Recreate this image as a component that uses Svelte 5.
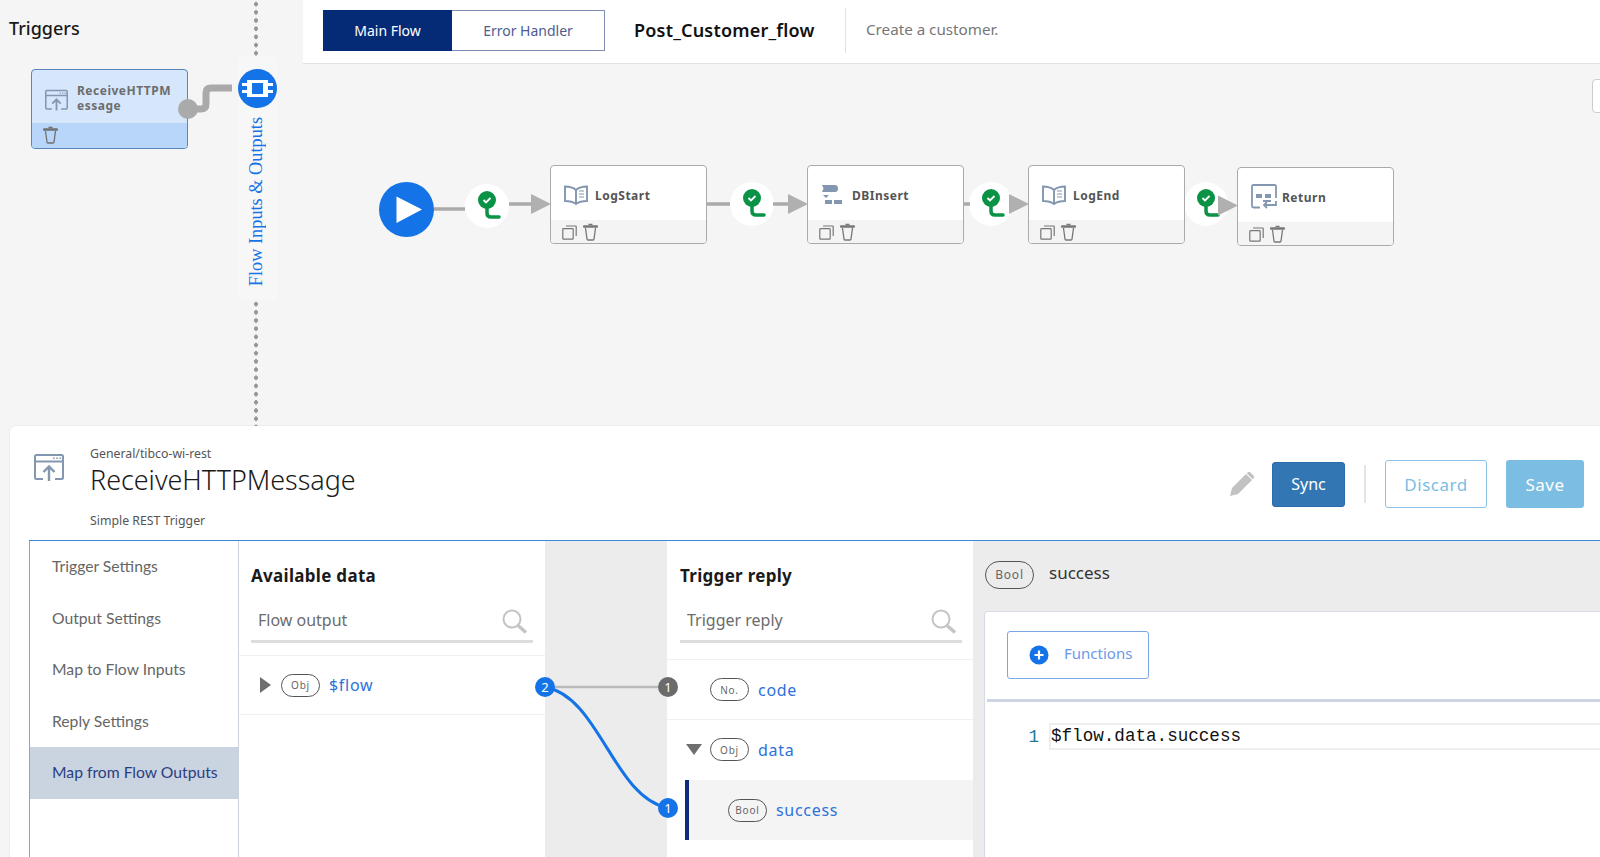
<script>
	const ox = 303;
	const oy = 64;

	const nodes = [
		{ name: 'LogStart', icon: 'book', x: 550, y: 165 },
		{ name: 'DBInsert', icon: 'db', x: 807, y: 165 },
		{ name: 'LogEnd', icon: 'book', x: 1028, y: 165 },
		{ name: 'Return', icon: 'return', x: 1237, y: 167 }
	];

	const branches = [
		{ x: 465, y: 184, w: 44 },
		{ x: 730, y: 182, w: 44 },
		{ x: 969, y: 182, w: 44 },
		{ x: 1184, y: 182, w: 44 }
	];

	const segments = [
		[434, 209, 465, 209],
		[509, 204, 532, 204],
		[707, 204, 730, 204],
		[773, 204, 790, 204],
		[964, 204, 970, 204]
	];

	const arrows = [
		[531, 204],
		[788, 204],
		[1009, 204],
		[1218, 205.500]
	];

	const tabs = ['Trigger Settings', 'Output Settings', 'Map to Flow Inputs', 'Reply Settings', 'Map from Flow Outputs'];
</script>

{#snippet trash(color = '#777')}
	<svg class="glyph" width="15" height="18" viewBox="0 0 15 18" fill="none" stroke={color} stroke-width="1.3">
		<path d="M1 3.5h13" stroke-width="2.4" stroke-linecap="round" />
		<path d="M5.5 1.5h4" stroke-width="1.6" />
		<path d="M2.5 5l1.5 11.2q.1.8 1 .8h5q.9 0 1-.8L12.5 5" />
	</svg>
{/snippet}

{#snippet copy()}
	<svg class="glyph" width="15" height="15" viewBox="0 0 15 15" fill="none" stroke="#777" stroke-width="1.2">
		<rect x="0.8" y="3.6" width="10.4" height="10.6" rx="0.8" />
		<path d="M4 1h9.6q.6 0 .6.6V11" />
	</svg>
{/snippet}

{#snippet upload(size = 24)}
	<svg width={size} height={size} viewBox="0 0 30 28" fill="none" stroke="#8497b0" stroke-width="2">
		<path d="M9 25H2.5q-1.500 0-1.500-1.500V2.500Q1 1 2.500 1h25Q29 1 29 2.500v21q0 1.500-1.500 1.500H21" />
		<path d="M1 7.500h28" />
		<path d="M15 27V13M9.500 18l5.500-5.500 5.500 5.500" stroke-width="2.400" />
		<path d="M19 4.300h1.600M22.300 4.300h1.600M25.500 4.300h1.600" stroke-width="1.600" />
	</svg>
{/snippet}

{#snippet nodeIcon(kind)}
	{#if kind === 'book'}
		<svg width="24" height="20" viewBox="0 0 24 20" fill="none" stroke="#8497b0" stroke-width="1.900">
			<path d="M12 5Q8 1.500 1 1.500V16q7 0 11 3 4-3 11-3V1.500Q16 1.500 12 5zM12 5v14" />
			<path d="M15 6h5M15 9h5M15 12h5" stroke-width="1.200" />
		</svg>
	{:else if kind === 'db'}
		<svg width="24" height="21" viewBox="0 0 24 21" fill="#8497b0">
			<path d="M1 0h13q3 0 3 3.500T14 7H1l1.500-3.500z" />
			<path d="M2 10h6l-3 3zM4 15h7v4H4zM13 15h8v4h-8z" />
		</svg>
	{:else}
		<svg width="26" height="26" viewBox="0 0 26 26" fill="none" stroke="#8497b0" stroke-width="1.800">
			<path d="M25 14V2.500Q25 1 23.500 1h-21Q1 1 1 2.500V22q0 1.500 1.500 1.500H9" />
			<path d="M5 12h6M14 12h6" stroke-width="4" />
			<path d="M25 17v4H13M16 18l-3 3 3 3M12 17h8" />
		</svg>
	{/if}
{/snippet}

{#snippet search()}
	<svg class="search-icon" width="26" height="25" viewBox="0 0 26 25" fill="none" stroke="#c4c4c4">
		<circle cx="10" cy="10" r="8.500" stroke-width="2" />
		<path d="M16 16.500l8 7" stroke-width="3.500" />
	</svg>
{/snippet}

{#snippet pin()}
	<svg width="44" height="44" viewBox="0 0 44 44" fill="none">
		<path d="M22 20v9q0 4 4 4h8" stroke="#0a9347" stroke-width="3.500" stroke-linecap="round" />
		<circle cx="22" cy="16" r="9" fill="#0a9347" />
		<path d="M18.500 16l2.500 2.500 4.500-4.500" stroke="#fff" stroke-width="1.800" />
	</svg>
{/snippet}

<div class="page">
	<section class="top">
		<aside class="triggers">
			<h2>Triggers</h2>
			<div class="trigger-card">
				<div class="trigger-body">
					{@render upload(23)}
					<span>ReceiveHTTPMessage</span>
				</div>
				<div class="trigger-foot">{@render trash('#707070')}</div>
			</div>
			<svg class="trigger-link" width="60" height="37" viewBox="0 0 60 37" fill="none">
				<path d="M8 26h15q5 0 5-5V10q0-5 5-5h21" stroke="#aaa" stroke-width="7" />
				<circle cx="10" cy="26" r="10" fill="#aaa" />
			</svg>
		</aside>

		<div class="rail">
			<div class="dots dots-top"></div>
			<div class="rail-box">
				<div class="rail-circle">
					<svg width="39" height="39" viewBox="0 0 39 39">
						<circle cx="19.500" cy="19.500" r="19.500" fill="#1473e6" />
						<rect x="4" y="14" width="31" height="3" fill="#fff" />
						<rect x="4" y="21" width="31" height="3" fill="#fff" />
						<rect x="9" y="11" width="21" height="17" fill="#fff" />
						<rect x="14" y="14" width="11" height="11" fill="#1473e6" />
					</svg>
				</div>
				<span class="rail-label">Flow Inputs &amp; Outputs</span>
			</div>
			<div class="dots"></div>
		</div>

		<div class="flow">
			<header class="flow-head">
				<div class="flow-tabs">
					<span class="flow-tab active">Main Flow</span>
					<span class="flow-tab">Error Handler</span>
				</div>
				<h1>Post_Customer_flow</h1>
				<p>Create a customer.</p>
			</header>
			<div class="canvas">
				<div class="edge-tab"></div>
				<div class="start">
					<svg width="55" height="55" viewBox="0 0 55 55">
						<circle cx="27.500" cy="27.500" r="27.500" fill="#1473e6" />
						<path d="M17.500 14.500L43 27.500 17.500 41z" fill="#fff" />
					</svg>
				</div>
				{#each branches as b}
					<div class="branch" style="left:{b.x - ox}px;top:{b.y - oy}px;width:{b.w}px">{@render pin()}</div>
				{/each}
				<svg class="links" width="1297" height="362" viewBox="303 64 1297 362" fill="none">
					{#each segments as [x1, y1, x2, y2]}
						<line {x1} {y1} {x2} {y2} stroke="#aaa" stroke-width="3.500" />
					{/each}
					{#each arrows as [x, y]}
						<path d="M{x} {y - 10}L{x + 20} {y}L{x} {y + 10}z" fill="#b0b0b0" />
					{/each}
				</svg>
				{#each nodes as n}
					<div class="node" style="left:{n.x - ox}px;top:{n.y - oy}px">
						<div class="node-body">
							<span class="node-icon">{@render nodeIcon(n.icon)}</span>
							<span class="node-name">{n.name}</span>
						</div>
						<div class="node-foot">{@render copy()}{@render trash()}</div>
					</div>
				{/each}
			</div>
		</div>
	</section>

	<section class="detail">
		<div class="detail-head">
			<div class="detail-icon">{@render upload(30)}</div>
			<div class="detail-title">
				<small>General/tibco-wi-rest</small>
				<h2>ReceiveHTTPMessage</h2>
				<small class="desc">Simple REST Trigger</small>
			</div>
			<div class="actions">
				<svg class="pencil" width="26" height="26" viewBox="0 0 26 26">
					<path d="M1 25l2-8L17 3l6 6L9 23z" fill="#c2c2c2" />
					<path d="M18.500 1.500q1.500-1.500 3 0l3 3q1.500 1.500 0 3l-.8.8-6-6z" fill="#c2c2c2" />
				</svg>
				<button class="btn sync">Sync</button>
				<span class="sep"></span>
				<button class="btn discard">Discard</button>
				<button class="btn save">Save</button>
			</div>
		</div>

		<div class="mapper">
			<nav class="side">
				{#each tabs as t, i}
					<div class="side-item" class:current={i === 4}>{t}</div>
				{/each}
			</nav>

			<div class="col col-left">
				<h3>Available data</h3>
				<div class="filter"><span>Flow output</span>{@render search()}</div>
				<div class="row row-flow">
					<span class="tri-right"></span>
					<span class="pill">Obj</span>
					<span class="field">$flow</span>
				</div>
			</div>

			<div class="gutter">
				<svg width="144" height="160" viewBox="-11 -11 144 160" fill="none">
					<line x1="0" y1="0" x2="123" y2="0" stroke="#bbb" stroke-width="2.500" />
					<path d="M0 0C55 10 68 110 123 121" stroke="#1473e6" stroke-width="3" />
					<circle cx="0" cy="0" r="10" fill="#1473e6" />
					<circle cx="123" cy="0" r="10" fill="#6b6b6b" />
					<circle cx="123" cy="121" r="10" fill="#1473e6" />
					<text x="0" y="5" text-anchor="middle">2</text>
					<text x="123" y="5" text-anchor="middle">1</text>
					<text x="123" y="126" text-anchor="middle">1</text>
				</svg>
			</div>

			<div class="col col-right">
				<h3>Trigger reply</h3>
				<div class="filter"><span>Trigger reply</span>{@render search()}</div>
				<div class="row row-code">
					<span class="pill">No.</span>
					<span class="field">code</span>
				</div>
				<div class="row row-data">
					<span class="tri-down"></span>
					<span class="pill">Obj</span>
					<span class="field">data</span>
				</div>
				<div class="row row-success">
					<span class="pill">Bool</span>
					<span class="field">success</span>
				</div>
			</div>

			<div class="editor">
				<div class="editor-head">
					<span class="pill pill-big">Bool</span>
					<span>success</span>
				</div>
				<div class="editor-card">
					<div class="editor-tools">
						<button class="functions">
							<svg width="20" height="20" viewBox="0 0 20 20">
								<circle cx="10" cy="10" r="9.500" fill="#1473e6" />
								<path d="M10 5.500v9M5.500 10h9" stroke="#fff" stroke-width="2.200" />
							</svg>
							<span>Functions</span>
						</button>
					</div>
					<div class="code">
						<span class="line-no">1</span>
						<span class="line">$flow.data.success</span>
					</div>
				</div>
			</div>
		</div>
	</section>
</div>

<style>
	:global(body) {
		margin: 0;
		background: #f5f5f5;
	}

	.page {
		width: 1600px;
		height: 857px;
		overflow: hidden;
		background: #f5f5f5;
		font-family: 'Noto Sans', 'Open Sans', sans-serif;
		color: #222;
	}

	h1, h2, h3, p {
		margin: 0;
	}

	.glyph {
		display: block;
	}

	.top {
		display: grid;
		grid-template-columns: 238px 39px 26px 1fr;
		height: 426px;
	}

	.triggers {
		position: relative;
		padding: 16px 0 0 9px;
	}

	.triggers h2 {
		font-size: 18px;
		line-height: 24px;
		font-weight: 500;
		color: #1a1a1a;
	}

	.trigger-card {
		box-sizing: border-box;
		width: 157px;
		height: 80px;
		margin: 29px 0 0 22px;
		border: 1px solid #5b86bb;
		border-radius: 4px;
		background: #d6e6fb;
		overflow: hidden;
	}

	.trigger-body {
		height: 53px;
		padding: 13px 0 0 13px;
		box-sizing: border-box;
		display: flex;
		gap: 9px;
		font-size: 12px;
		line-height: 15px;
		font-weight: 700;
		letter-spacing: 0.5px;
		color: #6d6d6d;
	}

	.trigger-body svg {
		flex: none;
		margin-top: 6px;
	}

	.trigger-body span {
		width: 100px;
		word-break: break-all;
	}

	.trigger-foot {
		height: 26px;
		padding: 3px 0 0 11px;
		box-sizing: border-box;
		background: #b7d6fa;
	}

	.trigger-link {
		position: absolute;
		left: 178px;
		top: 83px;
	}

	.rail {
		display: flex;
		flex-direction: column;
		align-items: center;
		grid-column: 2;
	}

	.dots {
		flex: 1;
		width: 4px;
		margin-right: 3px;
		background: radial-gradient(circle, #999 2px, transparent 2.200px) center top / 4px 8.200px repeat-y;
	}

	.dots-top {
		flex: none;
		height: 57px;
	}

	.rail-box {
		width: 39px;
		height: 243px;
		background: #f7f7f7;
		display: flex;
		flex-direction: column;
		align-items: center;
	}

	.rail-circle {
		height: 39px;
		margin-top: 12px;
	}

	.rail-label {
		margin-top: 9px;
		margin-right: 3px;
		writing-mode: vertical-rl;
		transform: rotate(180deg);
		font-family: 'Liberation Serif', serif;
		font-size: 18.300px;
		line-height: 20px;
		color: #1473e6;
		white-space: nowrap;
	}

	.flow {
		grid-column: 4;
		display: flex;
		flex-direction: column;
		min-width: 0;
	}

	.flow-head {
		height: 64px;
		box-sizing: border-box;
		background: #fff;
		border-bottom: 1px solid #e2e2e2;
		display: flex;
		align-items: center;
		padding: 0 0 3px 20px;
	}

	.flow-tabs {
		display: flex;
		height: 41px;
		box-sizing: border-box;
		border: 1px solid #7f8db5;
	}

	.flow-tab {
		display: flex;
		align-items: center;
		justify-content: center;
		width: 152px;
		font-size: 14px;
		color: #4d5c8f;
		font-stretch: condensed;
	}

	.flow-tab.active {
		width: 129px;
		margin: -1px 0 -1px -1px;
		background: #062b76;
		color: #fff;
	}

	.flow-head h1 {
		margin-left: 29px;
		width: 212px;
		height: 45px;
		box-sizing: border-box;
		border-right: 1px solid #e2e2e2;
		font-size: 18px;
		line-height: 45px;
		font-weight: 600;
		letter-spacing: 0.2px;
		color: #111;
		white-space: nowrap;
	}

	.flow-head p {
		margin-left: 20px;
		margin-top: -2px;
		font-size: 15.200px;
		color: #777;
	}

	.canvas {
		position: relative;
		flex: 1;
	}

	.edge-tab {
		position: absolute;
		right: -8px;
		top: 15px;
		width: 16px;
		height: 34px;
		box-sizing: border-box;
		background: #fff;
		border: 1px solid #ccc;
		border-radius: 4px;
	}

	.links {
		position: absolute;
		left: 0;
		top: 0;
	}

	.start {
		position: absolute;
		left: 76px;
		top: 118px;
		height: 55px;
	}

	.branch {
		position: absolute;
		height: 44px;
		border-radius: 50%;
		background: #fff;
		display: flex;
		justify-content: center;
	}

	.branch svg {
		flex: none;
	}

	.node {
		position: absolute;
		box-sizing: border-box;
		width: 157px;
		height: 79px;
		border: 1px solid #aaa;
		border-radius: 4px;
		background: #fff;
		overflow: hidden;
	}

	.node-body {
		height: 54px;
		display: flex;
		align-items: center;
		box-sizing: border-box;
		padding-left: 13px;
		padding-top: 4px;
	}

	.node-icon {
		width: 31px;
		display: flex;
	}

	.node-name {
		font-size: 12px;
		font-weight: 700;
		letter-spacing: 0.5px;
		color: #555;
	}

	.node-foot {
		height: 24px;
		background: #f4f4f4;
		display: flex;
		align-items: center;
		gap: 6px;
		padding-left: 11px;
	}

	.detail {
		margin-left: 10px;
		height: 431px;
		background: #fff;
		border-radius: 6px 0 0 0;
		box-shadow: 0 0 2px #ddd;
		overflow: hidden;
	}

	.detail-head {
		height: 114px;
		display: flex;
		padding-left: 24px;
		padding-right: 16px;
	}

	.detail-icon {
		width: 56px;
		padding-top: 27px;
		height: 30px;
	}

	.detail-title {
		padding-top: 20px;
		display: flex;
		flex-direction: column;
		align-items: flex-start;
	}

	.detail-title small {
		font-size: 12.300px;
		line-height: 16px;
		color: #555;
	}

	.detail-title h2 {
		font-size: 26.900px;
		line-height: 36px;
		font-weight: 300;
		color: #1a1a1a;
		white-space: nowrap;
	}

	.detail-title .desc {
		margin-top: 15px;
	}

	.actions {
		margin-left: auto;
		display: flex;
		align-items: center;
		height: 48px;
		margin-top: 34px;
	}

	.pencil {
		margin-right: 17px;
	}

	.btn {
		box-sizing: border-box;
		font: inherit;
		font-size: 17px;
		height: 48px;
		border-radius: 3px;
		border: 1px solid transparent;
		padding: 0;
	}

	.sync {
		width: 73px;
		height: 45px;
		background: #3277b3;
		border-color: #2a6cab;
		color: #fff;
		font-size: 16px;
	}

	.sep {
		width: 2px;
		height: 38px;
		background: #e4e4e4;
		margin: 0 19px;
	}

	.discard {
		width: 102px;
		background: #fff;
		border-color: #8cc4e8;
		color: #7cbde3;
		letter-spacing: 0.5px;
		margin-right: 19px;
	}

	.save {
		width: 78px;
		background: #7cbde3;
		color: #fff;
		letter-spacing: 0.5px;
	}

	.mapper {
		display: flex;
		height: 317px;
		margin-left: 19px;
		border-top: 1px solid #3b8ad6;
	}

	.side {
		flex: none;
		width: 210px;
		box-sizing: border-box;
		border-left: 1px solid #7aa9dd;
		border-right: 1px solid #ccd3dd;
		font-family: Lato, sans-serif;
		font-size: 15.700px;
	}

	.side-item {
		height: 51.500px;
		line-height: 51px;
		padding-left: 22px;
		box-sizing: border-box;
		color: #666;
	}

	.side-item.current {
		background: #cad3e0;
		color: #2b3f80;
	}

	.col {
		flex: none;
		width: 306px;
		box-sizing: border-box;
		position: relative;
	}

	.col h3 {
		padding: 23px 0 0 12px;
		font-size: 17px;
		line-height: 24px;
		font-weight: 700;
		letter-spacing: 0.3px;
		color: #1a1a1a;
	}

	.filter {
		margin: 9px 12px 0;
		height: 46px;
		box-sizing: border-box;
		border-bottom: 3px solid #ddd;
		display: flex;
		justify-content: space-between;
		align-items: flex-start;
		padding: 11px 5px 0 7px;
		font-size: 16px;
		color: #6c6c6c;
		line-height: 24px;
	}

	.search-icon {
		margin-top: 1px;
	}

	.row {
		display: flex;
		align-items: center;
		box-sizing: border-box;
		height: 60px;
		border-top: 1px solid #f0f0f0;
	}

	.row-flow {
		margin-top: 12px;
		padding-left: 21px;
		border-bottom: 1px solid #f0f0f0;
	}

	.tri-right {
		width: 0;
		height: 0;
		border-left: 11px solid #6f6f6f;
		border-top: 8.500px solid transparent;
		border-bottom: 8.500px solid transparent;
		margin-right: 10px;
	}

	.tri-down {
		position: absolute;
		left: 19px;
		width: 0;
		height: 0;
		border-top: 11px solid #6f6f6f;
		border-left: 8.500px solid transparent;
		border-right: 8.500px solid transparent;
	}

	.pill {
		box-sizing: border-box;
		width: 39px;
		height: 23px;
		border: 1px solid #555;
		border-radius: 12px;
		display: flex;
		align-items: center;
		justify-content: center;
		font-size: 10px;
		letter-spacing: 0.8px;
		color: #666;
		flex: none;
	}

	.field {
		margin-left: 9px;
		font-size: 16px;
		letter-spacing: 0.7px;
		color: #2d72dc;
	}

	.gutter {
		flex: none;
		width: 122px;
		background: #ececec;
		position: relative;
		z-index: 1;
	}

	.gutter svg {
		position: absolute;
		left: -11px;
		top: 135px;
		overflow: visible;
	}

	.gutter text {
		font-size: 13px;
		fill: #fff;
	}

	.col-right h3 {
		padding-left: 13px;
	}

	.col-right .filter {
		margin-left: 13px;
		margin-right: 11px;
	}

	.col-right .row {
		padding-left: 43px;
	}

	.row-code {
		margin-top: 16px;
	}

	.row-success {
		margin: 1px 0 0 18px;
		padding-left: 39px !important;
		border-top: none !important;
		border-left: 4px solid #0b2a80;
		background: #f4f4f4;
	}

	.editor {
		flex: 1;
		background: #ececec;
		padding-left: 11px;
		min-width: 0;
	}

	.editor-head {
		height: 70px;
		display: flex;
		align-items: flex-start;
		gap: 15px;
		padding: 20px 0 0 1px;
		box-sizing: border-box;
		font-size: 17px;
		line-height: 24px;
		color: #333;
	}

	.pill-big {
		width: 49px;
		height: 28px;
		font-size: 12px;
		border-radius: 14px;
	}

	.editor-card {
		height: 300px;
		background: #fff;
		border: 1px solid #d5dbe6;
		border-right: none;
		border-radius: 4px 0 0 0;
		box-sizing: border-box;
	}

	.editor-tools {
		height: 90px;
		box-sizing: border-box;
		padding: 19px 0 0 20px;
		border-bottom: 3px solid #cdd5e2;
		margin-left: 2px;
	}

	.functions {
		box-sizing: border-box;
		width: 142px;
		height: 48px;
		border: 1px solid #7ba7e6;
		border-radius: 3px;
		background: #fff;
		font: inherit;
		font-size: 15px;
		color: #6c9ae8;
		display: flex;
		align-items: center;
		gap: 15px;
		padding: 0 0 0 21px;
	}

	.functions span {
		margin-top: -4px;
	}

	.code {
		display: flex;
		align-items: center;
		margin-top: 21px;
		font-family: 'Liberation Mono', monospace;
		font-size: 17.600px;
	}

	.line-no {
		width: 64px;
		box-sizing: border-box;
		text-align: right;
		padding-right: 10px;
		color: #237893;
	}

	.line {
		flex: 1;
		height: 27px;
		line-height: 23px;
		box-sizing: border-box;
		border: 2px solid #eee;
		border-right: none;
		color: #111;
	}
</style>
